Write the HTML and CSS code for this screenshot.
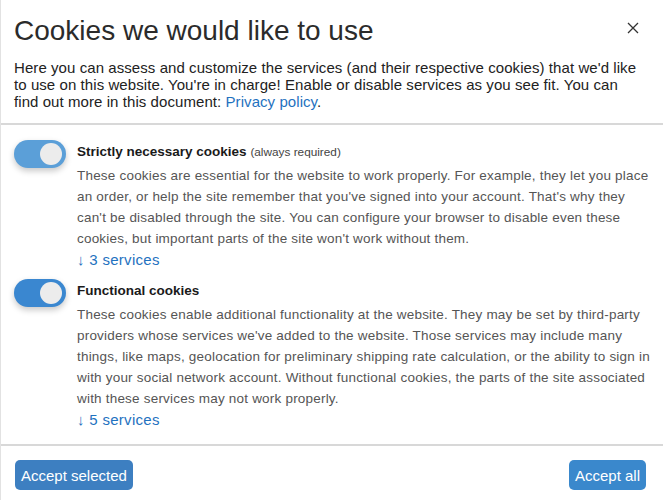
FILE: index.html
```html
<!DOCTYPE html>
<html>
<head>
<meta charset="utf-8">
<link rel="stylesheet" href="styles.css">
</head>
<body>
<div class="modal">
  <div class="header">
    <div class="title-row">
      <h1 class="title">Cookies we would like to use</h1>
      <button class="close" aria-label="Close">
        <svg width="12" height="12" viewBox="0 0 12 12"><path d="M1 1 L11 11 M11 1 L1 11" stroke="#333" stroke-width="1.3" fill="none"/></svg>
      </button>
    </div>
    <p class="intro">Here you can assess and customize the services (and their respective cookies) that we'd like to use on this website. You're in charge! Enable or disable services as you see fit. You can find out more in this document: <a class="link" href="#">Privacy policy</a>.</p>
  </div>
  <div class="body">
    <div class="purpose">
      <span class="switch switch-disabled"><span class="knob"></span></span>
      <div class="purpose-text">
        <div class="purpose-title"><b>Strictly necessary cookies</b> <span class="req">(always required)</span></div>
        <p class="desc">These cookies are essential for the website to work properly. For example, they let you place an order, or help the site remember that you've signed into your account. That's why they can't be disabled through the site. You can configure your browser to disable even these cookies, but important parts of the site won't work without them.</p>
        <a class="services" href="#">↓ 3 services</a>
      </div>
    </div>
    <div class="purpose">
      <span class="switch"><span class="knob"></span></span>
      <div class="purpose-text">
        <div class="purpose-title"><b>Functional cookies</b></div>
        <p class="desc">These cookies enable additional functionality at the website. They may be set by third-party providers whose services we've added to the website. Those services may include many things, like maps, geolocation for preliminary shipping rate calculation, or the ability to sign in with your social network account. Without functional cookies, the parts of the site associated with these services may not work properly.</p>
        <a class="services" href="#">↓ 5 services</a>
      </div>
    </div>
  </div>
  <div class="footer">
    <button class="btn btn-selected">Accept selected</button>
    <button class="btn btn-all">Accept all</button>
  </div>
</div>
</body>
</html>
```

FILE: styles.css
```css
* { box-sizing: border-box; }
html, body { margin: 0; padding: 0; background: #fff; }
body {
  font-family: "Liberation Sans", Arial, sans-serif;
  color: #333;
}
.modal {
  width: 663px;
  height: 500px;
  border-left: 1px solid #e2e2e2;
  display: flex;
  flex-direction: column;
}
.header {
  padding: 14px 20px 13px 13px;
  border-bottom: 2px solid #d8d8d8;
}
.title-row {
  display: flex;
  justify-content: space-between;
  align-items: flex-start;
  margin-right: -14px;
}
.title {
  margin: 0;
  font-size: 28px;
  font-weight: 400;
  line-height: 34px;
  color: #2b2b2b;
}
.close {
  border: 0;
  background: none;
  padding: 0;
  margin: 8px 18px 0 0;
  width: 12px;
  height: 12px;
  display: flex;
}
.intro {
  margin: 11px 0 0 0;
  font-size: 15px;
  line-height: 17px;
  letter-spacing: 0.07px;
  color: #222;
}
.link { color: #1f72c0; text-decoration: none; }
.body {
  flex: 1;
  padding: 14px 11px 0 13px;
  border-bottom: 2px solid #d8d8d8;
}
.purpose {
  display: flex;
  gap: 11px;
  margin-bottom: 8px;
}
.switch {
  flex: none;
  width: 52px;
  height: 28px;
  margin-top: 1px;
  border-radius: 14px;
  background: #3a87d0;
  display: flex;
  align-items: center;
  justify-content: flex-end;
  padding-right: 4px;
  box-shadow: 0 3px 6px rgba(0,0,0,0.22);
}
.switch-disabled { background: #5b9fd8; }
.knob {
  width: 22px;
  height: 22px;
  border-radius: 50%;
  background: #ececec;
}
.purpose-text { flex: 1; }
.purpose-title {
  font-size: 13.5px;
  line-height: 20px;
  color: #1a1a1a;
  margin-top: 3px;
}
.purpose-title b { font-weight: 700; }
.req { font-size: 11.8px; color: #444; }
.desc {
  margin: 3px 0 0 0;
  font-size: 13.5px;
  line-height: 21px;
  color: #555;
  letter-spacing: 0.2px;
}
.services {
  display: block;
  font-size: 15px;
  line-height: 21px;
  color: #1f72c0;
  text-decoration: none;
  letter-spacing: 0.3px;
}
.footer {
  height: 54px;
  padding: 14px 17px 0 14px;
  display: flex;
  justify-content: space-between;
  align-items: flex-start;
}
.btn {
  border: 0;
  border-radius: 5px;
  color: #fff;
  font-family: inherit;
  font-size: 15px;
  height: 30px;
  padding: 0 6px;
}
.btn-selected { background: #3d7fc1; }
.btn-all { background: #3a88cc; }
```
